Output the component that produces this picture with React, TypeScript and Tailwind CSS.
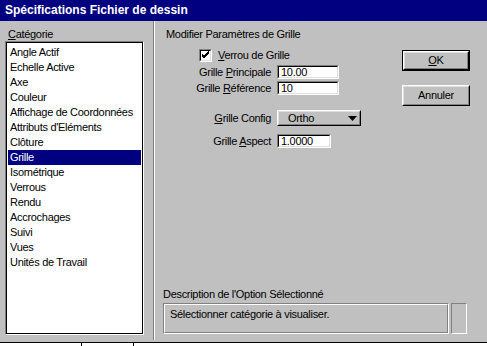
const items = [
	"Angle Actif",
	"Echelle Active",
	"Axe",
	"Couleur",
	"Affichage de Coordonnées",
	"Attributs d'Eléments",
	"Clôture",
	"Grille",
	"Isométrique",
	"Verrous",
	"Rendu",
	"Accrochages",
	"Suivi",
	"Vues",
	"Unités de Travail",
];

const Field = ({ value, w }: { value: string; w: string }) => (
	<div className={`h-[14px] ${w} border border-t-[#808080] border-l-[#808080] border-b-white border-r-white`}>
		<div className="h-full border border-t-black border-l-black border-b-[#dfdfdf] border-r-[#dfdfdf] bg-white pl-[2px] leading-[10px]">
			{value}
		</div>
	</div>
);

const Button = ({ children, isDefault }: { children: React.ReactNode; isDefault?: boolean }) => (
	<div className={`w-[68px] h-[21px] ${isDefault ? "border border-black" : ""}`}>
		<div className="h-full border border-t-white border-l-white border-b-black border-r-black">
			<div className="h-full border border-t-[#dfdfdf] border-l-[#dfdfdf] border-b-[#808080] border-r-[#808080] flex items-center justify-center">
				{children}
			</div>
		</div>
	</div>
);

export default function App() {
	return (
		<div
			className="w-[487px] h-[346px] bg-[#c0c0c0] flex flex-col overflow-hidden text-[11px] tracking-[-0.3px] text-black leading-[13px]"
			style={{ fontFamily: '"Liberation Sans", Arial, sans-serif' }}
		>
			{/* Title bar */}
			<div className="h-[21px] bg-[#000080] text-white font-bold text-[12px] tracking-normal pl-[5px] flex items-center">
				Spécifications Fichier de dessin
			</div>

			{/* Body */}
			<div className="flex flex-1 min-h-0">
				{/* Left: categories */}
				<div className="w-[153px] pl-[5px] pt-[7px] flex flex-col">
					<div className="h-[13px] pl-[3px]">
						<u>C</u>atégorie
					</div>
					<div className="w-[139px] h-[294px] border border-t-[#808080] border-l-[#808080] border-b-white border-r-white">
						<div className="h-full border border-black bg-white pt-[2px] px-[1px]">
							{items.map((it) => (
								<div
									key={it}
									className={`h-[15px] pl-[2px] flex items-center whitespace-nowrap ${
										it === "Grille" ? "bg-[#000080] text-white" : ""
									}`}
								>
									{it}
								</div>
							))}
						</div>
					</div>
				</div>

				{/* Separator */}
				<div className="w-[2px] mb-[2px] border-l border-l-[#808080] border-r border-r-white" />

				{/* Right: settings */}
				<div className="flex-1 flex flex-col pt-[7px]">
					<div className="h-[13px] pl-[11px]">Modifier Paramètres de Grille</div>

					<div className="flex">
						<div className="w-[247px] flex flex-col">
							<div className="mt-[8px] h-[13px] pl-[44px] flex items-center gap-[6px]">
								<div className="w-[13px] h-[13px] border border-t-[#808080] border-l-[#808080] border-b-white border-r-white">
									<div className="h-full border border-t-black border-l-black border-b-[#dfdfdf] border-r-[#dfdfdf] bg-white">
										<svg width="9" height="9" viewBox="0 0 9 9">
											<path d="M1 3 L3 5 L8 0 M1 4 L3 6 L8 1 M1 5 L3 7 L8 2" stroke="black" strokeWidth="1" fill="none" />
										</svg>
									</div>
								</div>
								<span>
									<u>V</u>errou de Grille
								</span>
							</div>

							<div className="mt-[3px] flex items-center">
								<div className="w-[116px] text-right">
									Grille <u>P</u>rincipale
								</div>
								<div className="ml-[6px]">
									<Field value="10.00" w="w-[62px]" />
								</div>
							</div>
							<div className="mt-[2px] flex items-center">
								<div className="w-[116px] text-right">
									Grille <u>R</u>éférence
								</div>
								<div className="ml-[6px]">
									<Field value="10" w="w-[62px]" />
								</div>
							</div>

							<div className="mt-[15px] flex items-center">
								<div className="w-[116px] text-right">
									<u>G</u>rille Config
								</div>
								<div className="ml-[6px] w-[84px] h-[16px] border border-t-white border-l-white border-b-black border-r-black">
									<div className="h-full border border-t-[#dfdfdf] border-l-[#dfdfdf] border-b-[#808080] border-r-[#808080] flex items-center pl-[9px] pr-[2px]">
										<span className="flex-1">Ortho</span>
										<svg width="9" height="5" viewBox="0 0 9 5">
											<path d="M0 0 H9 L4.5 5 Z" fill="black" />
										</svg>
									</div>
								</div>
							</div>

							<div className="mt-[8px] flex items-center">
								<div className="w-[116px] text-right">
									Grille <u>A</u>spect
								</div>
								<div className="ml-[6px]">
									<Field value="1.0000" w="w-[54px]" />
								</div>
							</div>
						</div>

						<div className="flex flex-col pt-[9px] gap-[14px]">
							<Button isDefault>
								<span>
									<u>O</u>K
								</span>
							</Button>
							<Button>Annuler</Button>
						</div>
					</div>

					{/* Description */}
					<div className="mt-auto pl-[8px] pb-[8px]">
						<div className="h-[13px]">Description de l'Option Sélectionné</div>
						<div className="mt-[2px] flex gap-[2px]">
							<div className="w-[286px] h-[31px] border border-t-[#808080] border-l-[#808080] border-b-white border-r-white">
								<div className="h-full border border-t-white border-l-white border-b-[#808080] border-r-[#808080] pl-[5px] pt-[3px]">
									Sélectionner catégorie à visualiser.
								</div>
							</div>
							<div className="w-[16px] h-[31px] border border-t-[#808080] border-l-[#808080] border-b-white border-r-white" />
						</div>
					</div>
				</div>
			</div>

			{/* Bottom strip */}
			<div className="h-[4px] border-t border-black bg-white flex">
				<div className="w-[82px] border-r border-black" />
				<div className="w-[52px] border-r border-black" />
			</div>
		</div>
	);
}
